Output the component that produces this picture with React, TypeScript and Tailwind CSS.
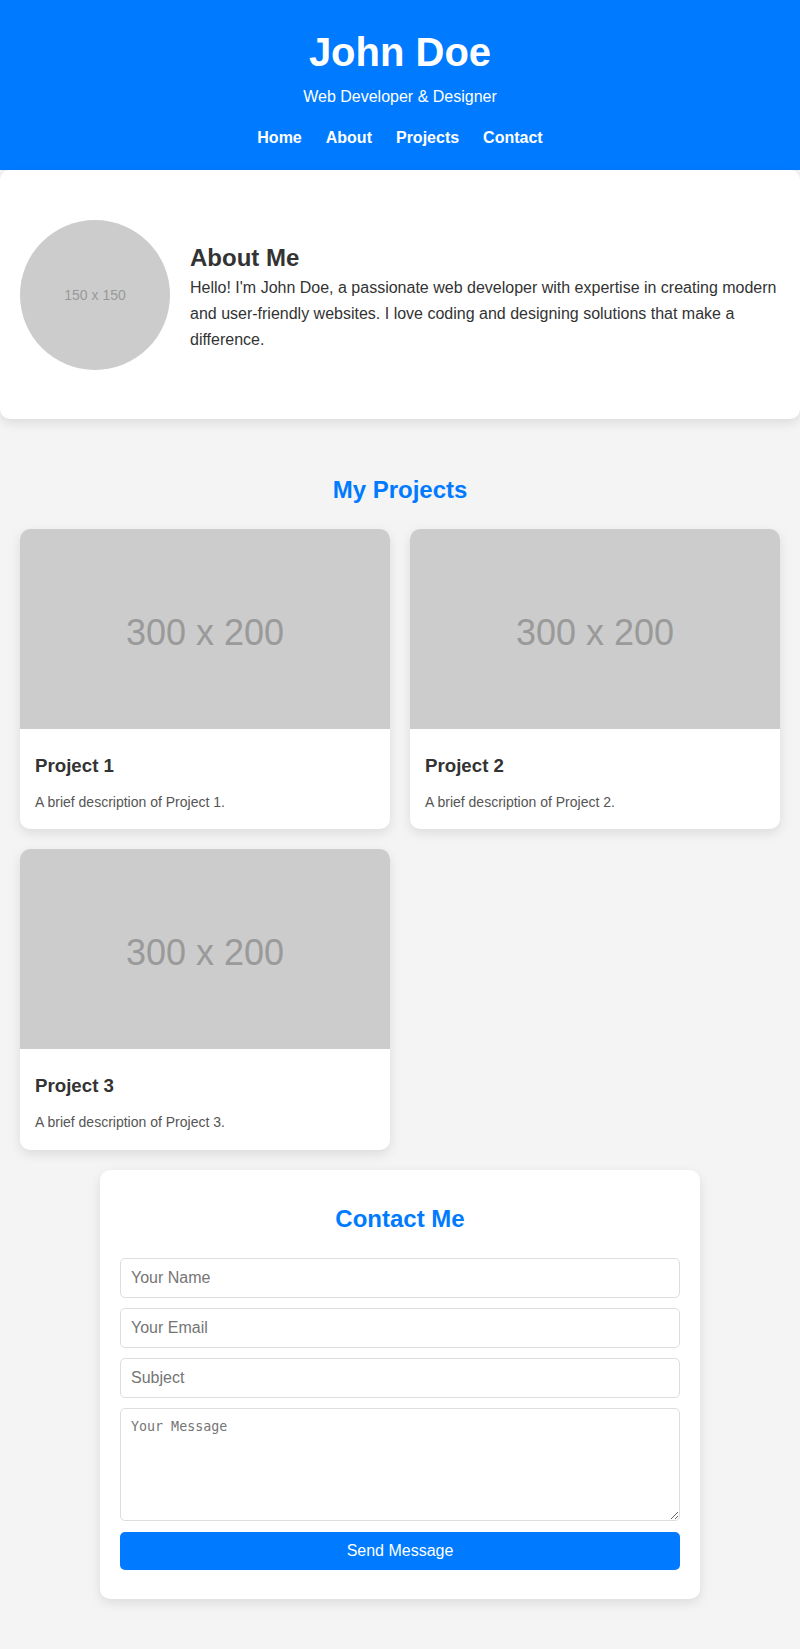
import React from "react";

const font = { fontFamily: '"Liberation Sans", Arial, Helvetica, sans-serif' };

function ProjectCard({ n }: { n: number }) {
  return (
    <div className="bg-white rounded-[10px] overflow-hidden shadow-[0_4px_12px_rgba(0,0,0,0.1)]">
      <div className="h-[200px] bg-[#cccccc] flex items-center justify-center pt-[7px]">
        <span className="text-[36px] leading-[42px] text-[#9a9a9a]">300 x 200</span>
      </div>
      <div className="px-[15px] pt-[22px] pb-[16px]">
        <h3 className="text-[18.72px] leading-[30px] font-bold text-[#333333]">Project {n}</h3>
        <p className="mt-[10px] text-[14px] leading-[22.4px] text-[#555555]">
          A brief description of Project {n}.
        </p>
      </div>
    </div>
  );
}

export default function App() {
  return (
    <div className="min-h-[1649px] bg-[#f4f4f4] text-[#333333]" style={font}>
      <header className="bg-[#007bff] text-white text-center pt-[29px] h-[170px]">
        <h1 className="text-[40px] leading-[46px] font-bold">John Doe</h1>
        <p className="mt-[13px] text-[16px] leading-[18px]">Web Developer &amp; Designer</p>
        <nav className="mt-[23px] flex justify-center gap-[24px] text-[16px] leading-[18px] font-bold">
          <a>Home</a>
          <a>About</a>
          <a>Projects</a>
          <a>Contact</a>
        </nav>
      </header>

      <section className="bg-white rounded-[10px] shadow-[0_4px_12px_rgba(0,0,0,0.1)] h-[249px] px-[20px] flex items-center gap-[20px]">
        <div className="w-[150px] h-[150px] shrink-0 rounded-full bg-[#cccccc] flex items-center justify-center pt-[2px]">
          <span className="text-[14px] text-[#999999]">150 x 150</span>
        </div>
        <div className="pt-[7px]">
          <h2 className="text-[24px] leading-[29px] font-bold text-[#333333]">About Me</h2>
          <p className="mt-[3px] text-[16px] leading-[26px] text-[#333333]">
            Hello! I'm John Doe, a passionate web developer with expertise in creating modern and
            user-friendly websites. I love coding and designing solutions that make a difference.
          </p>
        </div>
      </section>

      <section className="px-[20px] pt-[56px]">
        <h2 className="text-center text-[24px] leading-[29px] font-bold text-[#007bff]">My Projects</h2>
        <div className="mt-[25px] grid grid-cols-2 gap-[20px]">
          <ProjectCard n={1} />
          <ProjectCard n={2} />
          <ProjectCard n={3} />
        </div>
      </section>

      <section className="mt-[20px] mx-auto w-[600px] bg-white rounded-[10px] shadow-[0_4px_12px_rgba(0,0,0,0.1)] px-[20px] pt-[34px] pb-[29px]">
        <h2 className="text-center text-[24px] leading-[29px] font-bold text-[#007bff]">Contact Me</h2>
        <form className="mt-[25px] flex flex-col gap-[10px]" onSubmit={(e) => e.preventDefault()}>
          <input
            placeholder="Your Name"
            className="h-[40px] w-full border border-[#dddddd] rounded-[5px] px-[10px] text-[16px] placeholder:text-[#757575] outline-none"
            style={font}
          />
          <input
            placeholder="Your Email"
            className="h-[40px] w-full border border-[#dddddd] rounded-[5px] px-[10px] text-[16px] placeholder:text-[#757575] outline-none"
            style={font}
          />
          <input
            placeholder="Subject"
            className="h-[40px] w-full border border-[#dddddd] rounded-[5px] px-[10px] text-[16px] placeholder:text-[#757575] outline-none"
            style={font}
          />
          <textarea
            placeholder="Your Message"
            className="h-[113px] w-full border border-[#dddddd] rounded-[5px] p-[10px] text-[13.33px] leading-[16px] placeholder:text-[#757575] outline-none resize-y"
            style={{ fontFamily: '"DejaVu Sans Mono", "Liberation Mono", monospace' }}
          />
          <button
            type="submit"
            className="mt-[1px] h-[38px] w-full bg-[#007bff] text-white text-[16px] rounded-[5px]"
          >
            Send Message
          </button>
        </form>
      </section>
      <div className="h-[50px]" />
    </div>
  );
}
